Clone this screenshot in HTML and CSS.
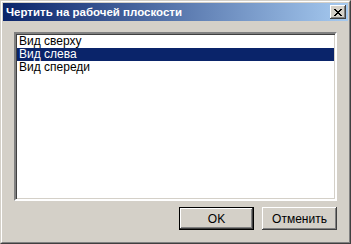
FILE: index.html
```html
<!DOCTYPE html>
<html lang="ru">
<head>
  <meta charset="UTF-8">
  <link rel="stylesheet" href="styles.css">
  <title>Чертить на рабочей плоскости</title>
</head>
<body>
  <div class="window">
    <div class="frame">
      <div class="titlebar">
        <span class="title">Чертить на рабочей плоскости</span>
        <button class="close-btn" aria-label="Закрыть">
          <svg width="8" height="7" viewBox="0 0 8 7">
            <path d="M0 0h2v1h1v1h2v-1h1v-1h2v1h-1v1h-1v1h-1v1h1v1h1v1h1v1h-2v-1h-1v-1h-2v1h-1v1h-2v-1h1v-1h1v-1h1v-1h-1v-1h-1v-1h-1z" fill="#000"/>
          </svg>
        </button>
      </div>
      <div class="content">
        <ul class="listbox">
          <li>Вид сверху</li>
          <li class="selected">Вид слева</li>
          <li>Вид спереди</li>
        </ul>
        <div class="buttons">
          <button class="btn default">OK</button>
          <button class="btn">Отменить</button>
        </div>
      </div>
    </div>
  </div>
</body>
</html>
```

FILE: styles.css
```css
body {
  margin: 0;
  padding: 0;
  background-color: #d4d0c8;
  font-family: 'Liberation Sans', Arial, sans-serif;
  font-size: 12px;
}

.window {
  width: 351px;
  height: 244px;
  box-sizing: border-box;
  border: 1px solid;
  border-color: #d4d0c8 #404040 #404040 #d4d0c8;
}

.frame {
  height: 100%;
  box-sizing: border-box;
  border: 1px solid;
  border-color: #fff #808080 #808080 #fff;
  padding: 1px;
  display: flex;
  flex-direction: column;
}

.titlebar {
  height: 18px;
  display: flex;
  align-items: center;
  justify-content: space-between;
  padding: 0 2px 0 3px;
  background: linear-gradient(to right, #0a246a, #a6caf0);
}

.title {
  color: #fff;
  font-weight: bold;
  font-size: 11.5px;
  white-space: nowrap;
}

.close-btn {
  width: 16px;
  height: 14px;
  padding: 0;
  margin: 0;
  box-sizing: border-box;
  background-color: #d4d0c8;
  border: none;
  box-shadow: inset -1px -1px #404040, inset 1px 1px #fff, inset -2px -2px #808080, inset 2px 2px #d4d0c8;
  display: flex;
  align-items: center;
  justify-content: center;
}

.close-btn svg {
  display: block;
}

.content {
  flex: 1;
  padding: 11px 11px 0 11px;
  display: flex;
  flex-direction: column;
}

.listbox {
  list-style: none;
  margin: 0;
  height: 169px;
  box-sizing: border-box;
  padding: 1px 0 0 0;
  background-color: #fff;
  border: 2px solid;
  border-color: #808080 #fff #fff #808080;
  box-shadow: inset 1px 1px #404040, inset -1px -1px #d4d0c8;
}

.listbox li {
  height: 13px;
  line-height: 13px;
  padding: 0 2px;
  margin: 0 1px;
  color: #000;
  white-space: nowrap;
}

.listbox li.selected {
  background-color: #0a246a;
  color: #fff;
}

.buttons {
  display: flex;
  justify-content: flex-end;
  gap: 8px;
  margin-top: 6px;
}

.btn {
  width: 75px;
  height: 23px;
  padding: 0;
  box-sizing: border-box;
  background-color: #d4d0c8;
  border: none;
  font-family: 'Liberation Sans', Arial, sans-serif;
  font-size: 12px;
  color: #000;
  box-shadow: inset -1px -1px #404040, inset 1px 1px #fff, inset -2px -2px #808080, inset 2px 2px #d4d0c8;
}

.btn.default {
  box-shadow: inset 0 0 0 1px #000, inset -2px -2px #404040, inset 2px 2px #fff, inset -3px -3px #808080;
}
```
